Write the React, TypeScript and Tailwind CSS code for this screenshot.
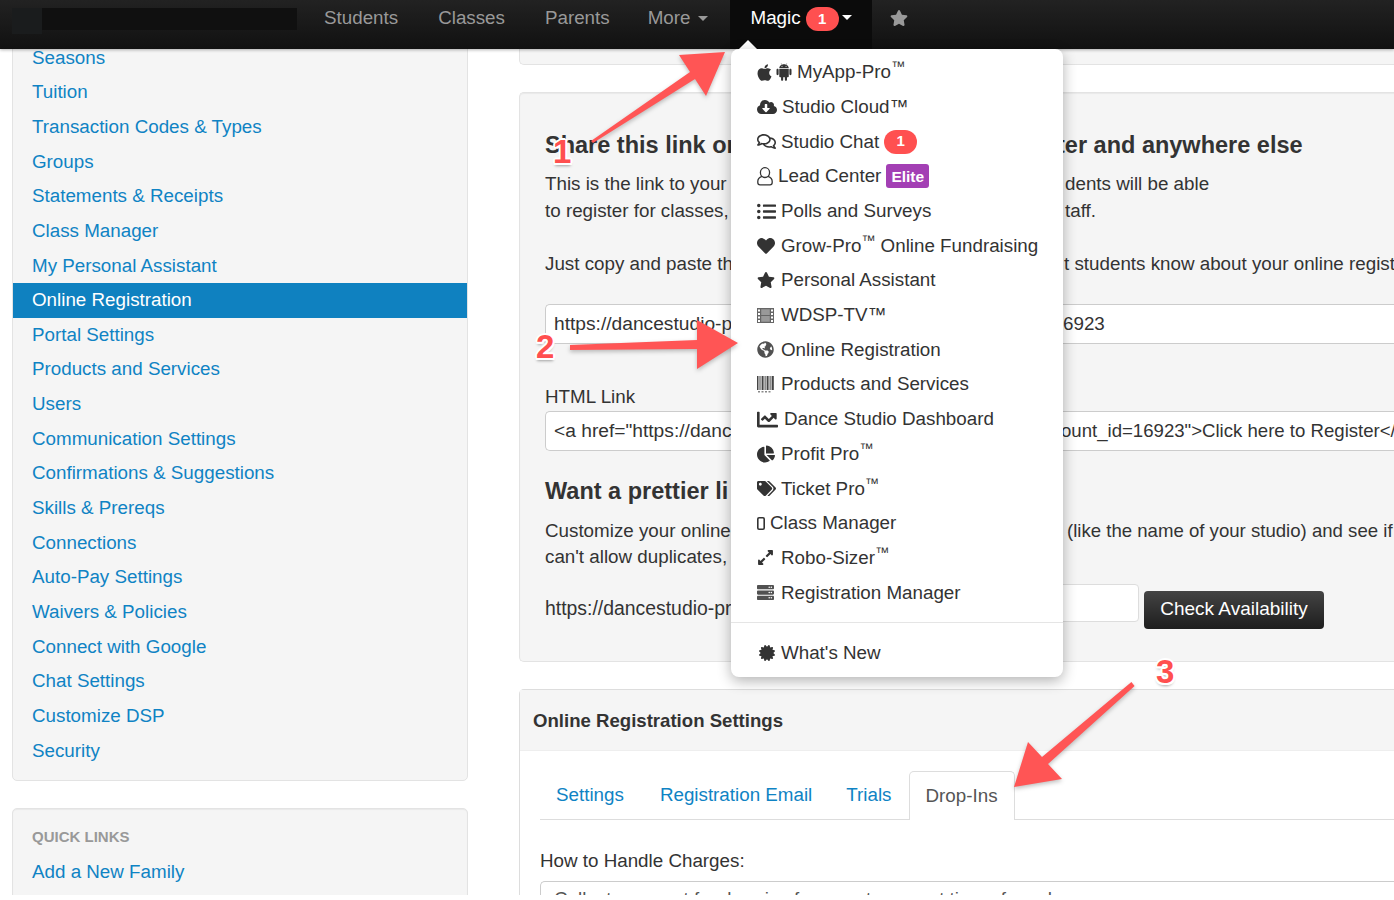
import { ReactNode } from "react";
import { AiFillAndroid } from "react-icons/ai";
import {
  FaApple,
  FaCertificate,
  FaChartLine,
  FaChartPie,
  FaCloudDownloadAlt,
  FaExpandAlt,
  FaGlobeAmericas,
  FaHeart,
  FaListUl,
  FaRegComments,
  FaServer,
  FaStar,
  FaTags,
} from "react-icons/fa";

const sideLinks = [
  "Seasons",
  "Tuition",
  "Transaction Codes & Types",
  "Groups",
  "Statements & Receipts",
  "Class Manager",
  "My Personal Assistant",
  "Online Registration",
  "Portal Settings",
  "Products and Services",
  "Users",
  "Communication Settings",
  "Confirmations & Suggestions",
  "Skills & Prereqs",
  "Connections",
  "Auto-Pay Settings",
  "Waivers & Policies",
  "Connect with Google",
  "Chat Settings",
  "Customize DSP",
  "Security",
];

function Tm() {
  return <sup className="text-[14px] leading-none">™</sup>;
}

function Badge({ children }: { children: ReactNode }) {
  return (
    <span className="inline-flex h-[24px] w-[33px] items-center justify-center rounded-full bg-[#ff5050] text-[15px] font-bold text-white">
      {children}
    </span>
  );
}

function Caret({ color }: { color: string }) {
  return <span className={`block h-0 w-0 border-x-[5px] border-t-[5px] border-x-transparent ${color}`} />;
}

function TabletIcon() {
  return (
    <svg width="8" height="13" viewBox="0 0 8 13" fill="none" stroke="currentColor" strokeWidth="1.6">
      <rect x="0.8" y="0.8" width="6.4" height="11.4" rx="1.2" />
    </svg>
  );
}

function UserIcon() {
  return (
    <svg width="16" height="19" viewBox="0 0 16 19" fill="none" stroke="currentColor" strokeWidth="1.3">
      <ellipse cx="8" cy="5.6" rx="4.6" ry="4.9" />
      <path d="M5 9.4C2.6 10.2 0.8 11.6 0.8 14.4v1.2c0 1.3 1 2.2 2.2 2.2h10c1.2 0 2.2-.9 2.2-2.2v-1.2c0-2.8-1.8-4.2-4.2-5" />
    </svg>
  );
}

function FilmIcon() {
  return (
    <svg width="17" height="15" viewBox="0 0 17 15" fill="#666">
      <path d="M0 0h17v15H0z" />
      <path
        fill="#fff"
        d="M1 1.5h2v2H1zM1 5h2v2H1zM1 8.5h2v2H1zM1 12h2v2H1zM14 1.5h2v2h-2zM14 5h2v2h-2zM14 8.5h2v2h-2zM14 12h2v2h-2z"
      />
      <path fill="#999" d="M4.2 1.2h8.6v5.7H4.2zM4.2 8.1h8.6v5.7H4.2z" />
    </svg>
  );
}

function BarcodeIcon() {
  return (
    <svg width="17" height="17" viewBox="0 0 17 17" fill="#444">
      <path d="M0 0h1.5v14H0zM2.5 0h1v14h-1zM4.6 0h2v14h-2zM7.6 0h1v14h-1zM9.6 0h2v14h-2zM12.6 0h1v14h-1zM14.6 0h2.2v14h-2.2z" />
      <path fill="#888" d="M1 15h2v1.6H1zM4.5 15h2v1.6h-2zM8 15h2v1.6H8zM11.5 15h2v1.6h-2z" />
    </svg>
  );
}

type Row = { icon: ReactNode; box?: string; label: ReactNode };

const menuRows: Row[] = [
  {
    box: "w-[35px]",
    icon: (
      <>
        <FaApple className="-ml-[2px] size-[19px] shrink-0" />
        <AiFillAndroid className="size-[20px] shrink-0" />
      </>
    ),
    label: (
      <>
        MyApp-Pro
        <Tm />
      </>
    ),
  },
  { box: "w-[20px]", icon: <FaCloudDownloadAlt className="size-[20px]" />, label: "Studio Cloud™" },
  {
    icon: <FaRegComments className="size-[19px]" />,
    label: (
      <span className="flex items-center gap-[5px]">
        Studio Chat <Badge>1</Badge>
      </span>
    ),
  },
  {
    box: "w-[16px]",
    icon: <UserIcon />,
    label: (
      <span className="flex items-center gap-[5px]">
        Lead Center
        <span className="flex h-[24px] items-center rounded-[3px] bg-[#a33fb4] px-[5px] text-[15.5px] font-bold text-white">
          Elite
        </span>
      </span>
    ),
  },
  { icon: <FaListUl className="size-[19px]" />, label: "Polls and Surveys" },
  {
    icon: <FaHeart className="size-[18px]" />,
    label: (
      <>
        Grow-Pro
        <Tm /> Online Fundraising
      </>
    ),
  },
  { icon: <FaStar className="size-[18px]" />, label: "Personal Assistant" },
  { icon: <FilmIcon />, label: "WDSP-TV™" },
  { icon: <FaGlobeAmericas className="size-[17px] opacity-85" />, label: "Online Registration" },
  { icon: <BarcodeIcon />, label: "Products and Services" },
  { box: "w-[22px]", icon: <FaChartLine className="size-[21px]" />, label: "Dance Studio Dashboard" },
  {
    icon: <FaChartPie className="size-[18px]" />,
    label: (
      <>
        Profit Pro
        <Tm />
      </>
    ),
  },
  {
    icon: <FaTags className="size-[19px]" />,
    label: (
      <>
        Ticket Pro
        <Tm />
      </>
    ),
  },
  { box: "w-[8px]", icon: <TabletIcon />, label: "Class Manager" },
  {
    icon: <FaExpandAlt className="size-[17px]" />,
    label: (
      <>
        Robo-Sizer
        <Tm />
      </>
    ),
  },
  { icon: <FaServer className="size-[17px] opacity-85" />, label: "Registration Manager" },
];

function MenuRow({ icon, box = "w-[19px]", label }: Row) {
  return (
    <div className="flex h-[34.7px] items-center gap-[5px] whitespace-nowrap pl-[26px] text-[#333]">
      <span className={`flex shrink-0 items-center ${box}`}>{icon}</span>
      <span className="flex-none">{label}</span>
    </div>
  );
}

function MagicMenu() {
  return (
    <div className="absolute left-[731px] top-[49px] z-20 h-[628px] w-[332px] rounded-lg bg-white pt-[6px] shadow-[0_4px_14px_rgba(0,0,0,0.3)]">
      {menuRows.map((row, i) => (
        <MenuRow key={i} {...row} />
      ))}
      <div className="mt-[11.5px] mb-[13.5px] h-px bg-[#e5e5e5]" />
      <MenuRow icon={<FaCertificate className="ml-[2px] size-[16px]" />} label="What's New" />
    </div>
  );
}

function Navbar() {
  return (
    <header className="relative z-10 flex h-[49px] items-stretch bg-gradient-to-b from-[#222] to-[#111] text-[#999] shadow-[0_1px_3px_rgba(0,0,0,0.3)]">
      <div className="mt-[8px] ml-[12px] flex h-[22px] w-[285px] bg-[#101010]">
        <div className="h-[26px] w-[30px] bg-[#1a1c1d]" />
      </div>
      <nav className="ml-[7px] flex">
        <a className="px-5 pt-[4px]">Students</a>
        <a className="px-5 pt-[4px]">Classes</a>
        <a className="pt-[4px] pr-[18px] pl-5">Parents</a>
        <a className="flex items-start gap-[8px] pt-[4px] pr-[22px] pl-5">
          More
          <span className="mt-[12px]">
            <Caret color="border-t-[#999]" />
          </span>
        </a>
        <a className="relative flex w-[142px] items-start gap-[5px] bg-[#0b0b0b] pt-[4px] pl-5 text-white">
          Magic
          <span className="mt-[3px] flex">
            <Badge>1</Badge>
          </span>
          <span className="mt-[11px] -ml-[2px]">
            <Caret color="border-t-white" />
          </span>
          <span className="absolute bottom-0 left-[9px] h-0 w-0 border-x-[9px] border-b-[9px] border-x-transparent border-b-white" />
        </a>
        <span className="flex h-[36px] items-center pl-[18px]">
          <FaStar className="size-[18px]" />
        </span>
      </nav>
    </header>
  );
}

function Sidebar() {
  return (
    <aside className="w-[456px] shrink-0">
      <div className="rounded-b-[5px] border border-[#e3e3e3] bg-[#f5f5f5] pt-[0.5px] pb-[12.5px]">
        {sideLinks.map((label) => (
          <a
            key={label}
            className={
              label === "Online Registration"
                ? "flex h-[34.65px] items-center bg-[#0f81c0] pl-[19px] text-white"
                : "flex h-[34.65px] items-center pl-[19px] text-[#0f83c4]"
            }
          >
            {label}
          </a>
        ))}
      </div>
      <div className="mt-[27px] h-[120px] rounded-[5px] border border-[#e3e3e3] bg-[#f5f5f5] pt-[18px] pl-[19px] shadow-[inset_0_1px_1px_rgba(0,0,0,0.05)]">
        <div className="text-[15px] leading-[20px] font-bold text-[#999]">QUICK LINKS</div>
        <a className="mt-[7px] flex h-[34.7px] items-center text-[#0f83c4]">Add a New Family</a>
      </div>
    </aside>
  );
}

// left part runs under the open menu, so only the visible ends are written out
function Split({ left, right, at = 515 }: { left: ReactNode; right?: ReactNode; at?: number }) {
  return (
    <div className="flex whitespace-nowrap">
      <span className="shrink-0" style={{ width: at }}>
        {left}
      </span>
      <span className="shrink-0">{right}</span>
    </div>
  );
}

function ShareWell() {
  return (
    <section className="mt-[27px] h-[570px] rounded-l-[5px] border border-r-0 border-[#e3e3e3] bg-[#f5f5f5] pl-[25px] leading-[26.7px] text-[#333] shadow-[inset_0_1px_1px_rgba(0,0,0,0.05)]">
      <h3 className="mt-[36px] text-[23.5px] leading-[32px] font-bold">
        <Split left="Share this link or" right="ter and anywhere else" at={512} />
      </h3>
      <div className="mt-[10px]">
        <Split left="This is the link to your" right="dents will be able" at={520} />
        <Split left="to register for classes," right="taff." at={520} />
      </div>
      <div className="mt-[27px]">
        <Split left="Just copy and paste th" right="t students know about your online registration" at={519} />
      </div>
      <div className="mt-[26px] flex h-[40px] items-center rounded-l-[5px] border border-r-0 border-[#ccc] bg-white pl-[8px]">
        <Split left={<span className="text-[19.2px]">https://dancestudio-p</span>} right="6923" at={509} />
      </div>
      <div className="mt-[40px]">HTML Link</div>
      <div className="flex h-[40px] items-center rounded-l-[5px] border border-r-0 border-[#ccc] bg-white pt-px pl-[8px]">
        <Split
          left={<span className="text-[19.2px]">{'<a href="https://danc'}</span>}
          right={<span className="text-[18.6px]">{'ount_id=16923">Click here to Register</a>'}</span>}
          at={507}
        />
      </div>
      <h3 className="mt-[24px] text-[23.5px] leading-[32px] font-bold">Want a prettier li</h3>
      <div className="mt-[11px] leading-[26px]">
        <Split
          left="Customize your online"
          right={<span className="text-[18.6px]">(like the name of your studio) and see if</span>}
          at={522}
        />
        <Split left="can't allow duplicates," />
      </div>
      <div className="mt-[14px] flex items-start whitespace-nowrap">
        <span className="w-[250px] pt-[11px] text-[19.4px]">https://dancestudio-pr</span>
        <span className="h-[38px] w-[344px] rounded-[4px] border border-[#ddd] bg-white" />
        <button className="mt-[7px] ml-[5px] h-[38px] w-[180px] rounded-[4px] bg-gradient-to-b from-[#444] to-[#1e1e1e] text-center text-[19px] text-white">
          Check Availability
        </button>
      </div>
    </section>
  );
}

function SettingsPanel() {
  return (
    <section className="mt-[27px] h-[300px] rounded-l-[5px] border border-r-0 border-[#ddd] bg-white">
      <div className="flex h-[61px] items-center border-b border-[#eee] bg-[#f5f5f5] pt-px pl-[13px] text-[18.6px] font-bold text-[#333]">
        Online Registration Settings
      </div>
      <div className="mt-[20px] ml-[20px] flex h-[49px] items-stretch border-b border-[#ddd] text-[#0f83c4]">
        <a className="flex items-center px-4">Settings</a>
        <a className="ml-[4px] flex items-center px-4">Registration Email</a>
        <a className="ml-[2px] flex items-center px-4">Trials</a>
        <a className="ml-px flex -mb-px items-center rounded-t-[5px] border border-b-0 border-[#ddd] bg-white px-4 text-[#555]">
          Drop-Ins
        </a>
      </div>
      <div className="mt-[27px] ml-[20px] leading-[28px] text-[#333]">How to Handle Charges:</div>
      <div className="mt-[6px] ml-[20px] h-[40px] rounded-l-[5px] border border-r-0 border-[#ccc] bg-white pt-[3px] pl-[13px] whitespace-nowrap text-[#555]">
        Collect payment for drop-ins from customers at time of purchase
      </div>
    </section>
  );
}

function Arrows() {
  return (
    <svg
      className="absolute top-0 left-0 z-30 drop-shadow-[0_2px_2px_rgba(0,0,0,0.25)]"
      width="1394"
      height="895"
      viewBox="0 0 1394 895"
      fill="#ff5555"
    >
      <polygon points="591,141 690,72 679,55 725,52 706,96 695,79 593,143" />
      <polygon points="570,345 697,340 697,320 738,343 697,369 697,349 570,350" />
      <polygon points="1131.4,682 1042,757 1028,742 1014,787 1062,779 1048,764 1134.6,686" />
    </svg>
  );
}

function Callout({ n, className }: { n: number; className: string }) {
  return (
    <span
      className={`absolute z-30 text-[33px] leading-none font-bold text-[#ff4f4f] [text-shadow:-2px_0_0_#fff,2px_0_0_#fff,0_-2px_0_#fff,0_2px_0_#fff,-1.5px_-1.5px_0_#fff,1.5px_1.5px_0_#fff,1.5px_-1.5px_0_#fff,-1.5px_1.5px_0_#fff,0_3px_3px_rgba(0,0,0,0.35)] ${className}`}
    >
      {n}
    </span>
  );
}

export default function App() {
  return (
    <div className="h-[900px] w-full overflow-hidden bg-white">
      <div className="relative h-[895px] overflow-hidden font-['Liberation_Sans',Arial,sans-serif] text-[18.8px]">
        <Navbar />
        <div className="-mt-[10px] flex">
          <div className="ml-[12px]">
            <Sidebar />
          </div>
          <main className="ml-[51px] min-w-[900px] grow">
            <div className="h-[26px] rounded-b-[5px] border border-t-0 border-r-0 border-[#e3e3e3] bg-[#f5f5f5]" />
            <ShareWell />
            <SettingsPanel />
          </main>
        </div>
        <MagicMenu />
        <Arrows />
        <Callout n={1} className="top-[135px] left-[553px]" />
        <Callout n={2} className="top-[330px] left-[536px]" />
        <Callout n={3} className="top-[655px] left-[1156px]" />
      </div>
    </div>
  );
}
